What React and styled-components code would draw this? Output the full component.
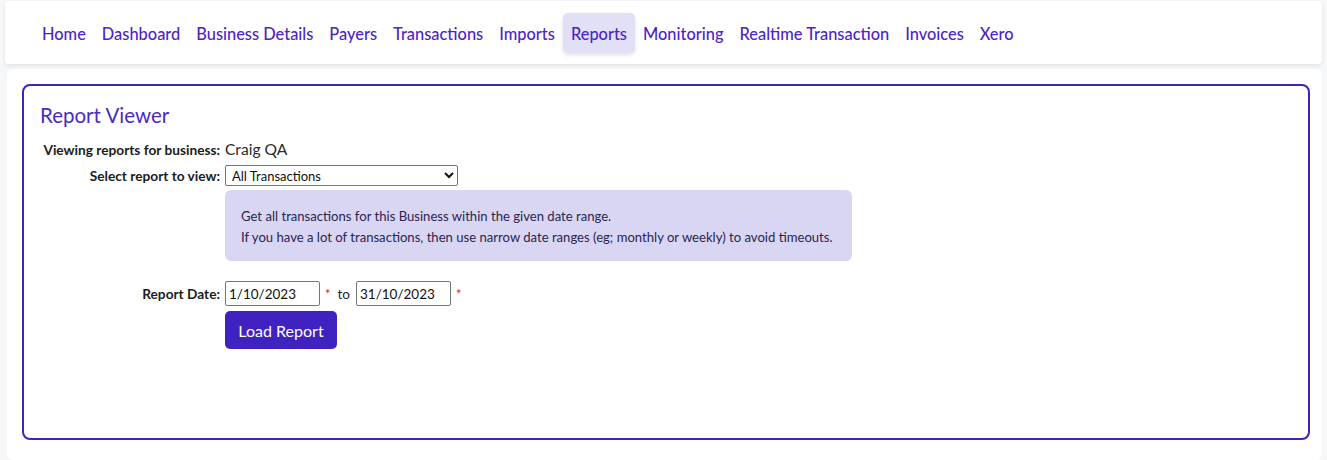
import React from "react";
import styled, { createGlobalStyle } from "styled-components";

const Global = createGlobalStyle`
  html, body { margin: 0; padding: 0; background: #f6f7f9; }
  body { font-family: "Lato", "Noto Sans", "Liberation Sans", sans-serif; color: #212529; }
  * { box-sizing: border-box; }
`;

const Page = styled.div`
  padding: 1px 5px 0 5px;
  display: flex;
  flex-direction: column;
  gap: 5px;
  height: 460px;
  overflow: hidden;
`;

const NavCard = styled.nav`
  background: #fff;
  border-radius: 4px;
  box-shadow: 0 2px 4px rgba(0, 0, 0, 0.08);
  height: 63px;
  display: flex;
  align-items: center;
  padding: 0 29px;
`;

const NavLink = styled.a`
  font-size: 16.4px;
  font-weight: 500;
  color: #4b25c6;
  text-decoration: none;
  padding: 2px 8px 0 8px;
  height: 40px;
  display: flex;
  align-items: center;
  border-radius: 5px;
  background: ${(p) => (p.$active ? "#e1e0f6" : "transparent")};
  box-shadow: ${(p) => (p.$active ? "0 2px 4px rgba(0,0,0,0.12)" : "none")};
`;

const MainCard = styled.main`
  flex: 1;
  background: #fff;
  border-radius: 6px;
  margin-left: 2px;
  padding: 15px 12px 0 15px;
`;

const Frame = styled.section`
  border: 2px solid #3f22c0;
  border-radius: 8px;
  height: 356px;
  padding: 15px 16px 0 16px;
`;

const Title = styled.h2`
  margin: 0 0 8px 0;
  font-size: 20.5px;
  font-weight: 400;
  color: #4a2bc2;
  line-height: 28px;
`;

const FormGrid = styled.div`
  display: grid;
  grid-template-columns: 180px 1fr;
  column-gap: 5px;
  row-gap: 0;
  align-items: center;
`;

const Label = styled.label`
  font-size: 13.7px;
  font-weight: 700;
  text-align: right;
  color: #1c1c1c;
  white-space: nowrap;
  padding-top: ${(p) => p.$pt || 0}px;
`;

const Value = styled.div`
  font-size: 15.6px;
  color: #2a2a2a;
  line-height: 24px;
`;

const Cell = styled.div`
  display: flex;
  align-items: center;
  padding-top: ${(p) => p.$pt || 0}px;
`;

const Select = styled.select`
  width: 233px;
  height: 21px;
  font-family: inherit;
  font-size: 13px;
  border: 1px solid #767676;
  border-radius: 2px;
  padding: 0 2px;
  background: #fff;
  color: #111;
`;

const InfoBox = styled.div`
  margin-top: 4px;
  width: 627px;
  background: #d8d6f2;
  border-radius: 6px;
  padding: 16px 16px 13px 16px;
  font-size: 13.1px;
  line-height: 21px;
  color: #2b2451;
  white-space: nowrap;
`;

const DateInput = styled.input`
  width: 95px;
  height: 25px;
  font-family: inherit;
  font-size: 13.5px;
  border: 1px solid #767676;
  border-radius: 2px;
  padding: 0 3px;
  color: #111;
`;

const Required = styled.span`
  color: #e0182d;
  font-size: 13px;
  margin: 0 7px 0 5px;
`;

const To = styled.span`
  font-size: 13.5px;
  margin-right: 6px;
`;

const Button = styled.button`
  margin-top: 5px;
  width: 112px;
  height: 38px;
  background: #3f22c0;
  color: #fff;
  border: none;
  border-radius: 5px;
  font-family: inherit;
  font-size: 16px;
`;

const links = [
  "Home",
  "Dashboard",
  "Business Details",
  "Payers",
  "Transactions",
  "Imports",
  "Reports",
  "Monitoring",
  "Realtime Transaction",
  "Invoices",
  "Xero",
];

export default function App() {
  return (
    <>
      <Global />
      <Page>
        <NavCard>
          {links.map((l) => (
            <NavLink key={l} href="#" $active={l === "Reports"}>
              {l}
            </NavLink>
          ))}
        </NavCard>
        <MainCard>
          <Frame>
            <Title>Report Viewer</Title>
            <FormGrid>
              <Label>Viewing reports for business:</Label>
              <Value>Craig QA</Value>

              <Label $pt={4}>Select report to view:</Label>
              <Cell $pt={4}>
                <Select defaultValue="all">
                  <option value="all">All Transactions</option>
                </Select>
              </Cell>

              <div />
              <InfoBox>
                Get all transactions for this Business within the given date range.
                <br />
                If you have a lot of transactions, then use narrow date ranges (eg; monthly or weekly) to avoid timeouts.
              </InfoBox>

              <Label $pt={20}>Report Date:</Label>
              <Cell $pt={20}>
                <DateInput defaultValue="1/10/2023" />
                <Required>*</Required>
                <To>to</To>
                <DateInput defaultValue="31/10/2023" />
                <Required>*</Required>
              </Cell>

              <div />
              <Cell>
                <Button>Load Report</Button>
              </Cell>
            </FormGrid>
          </Frame>
        </MainCard>
      </Page>
    </>
  );
}
